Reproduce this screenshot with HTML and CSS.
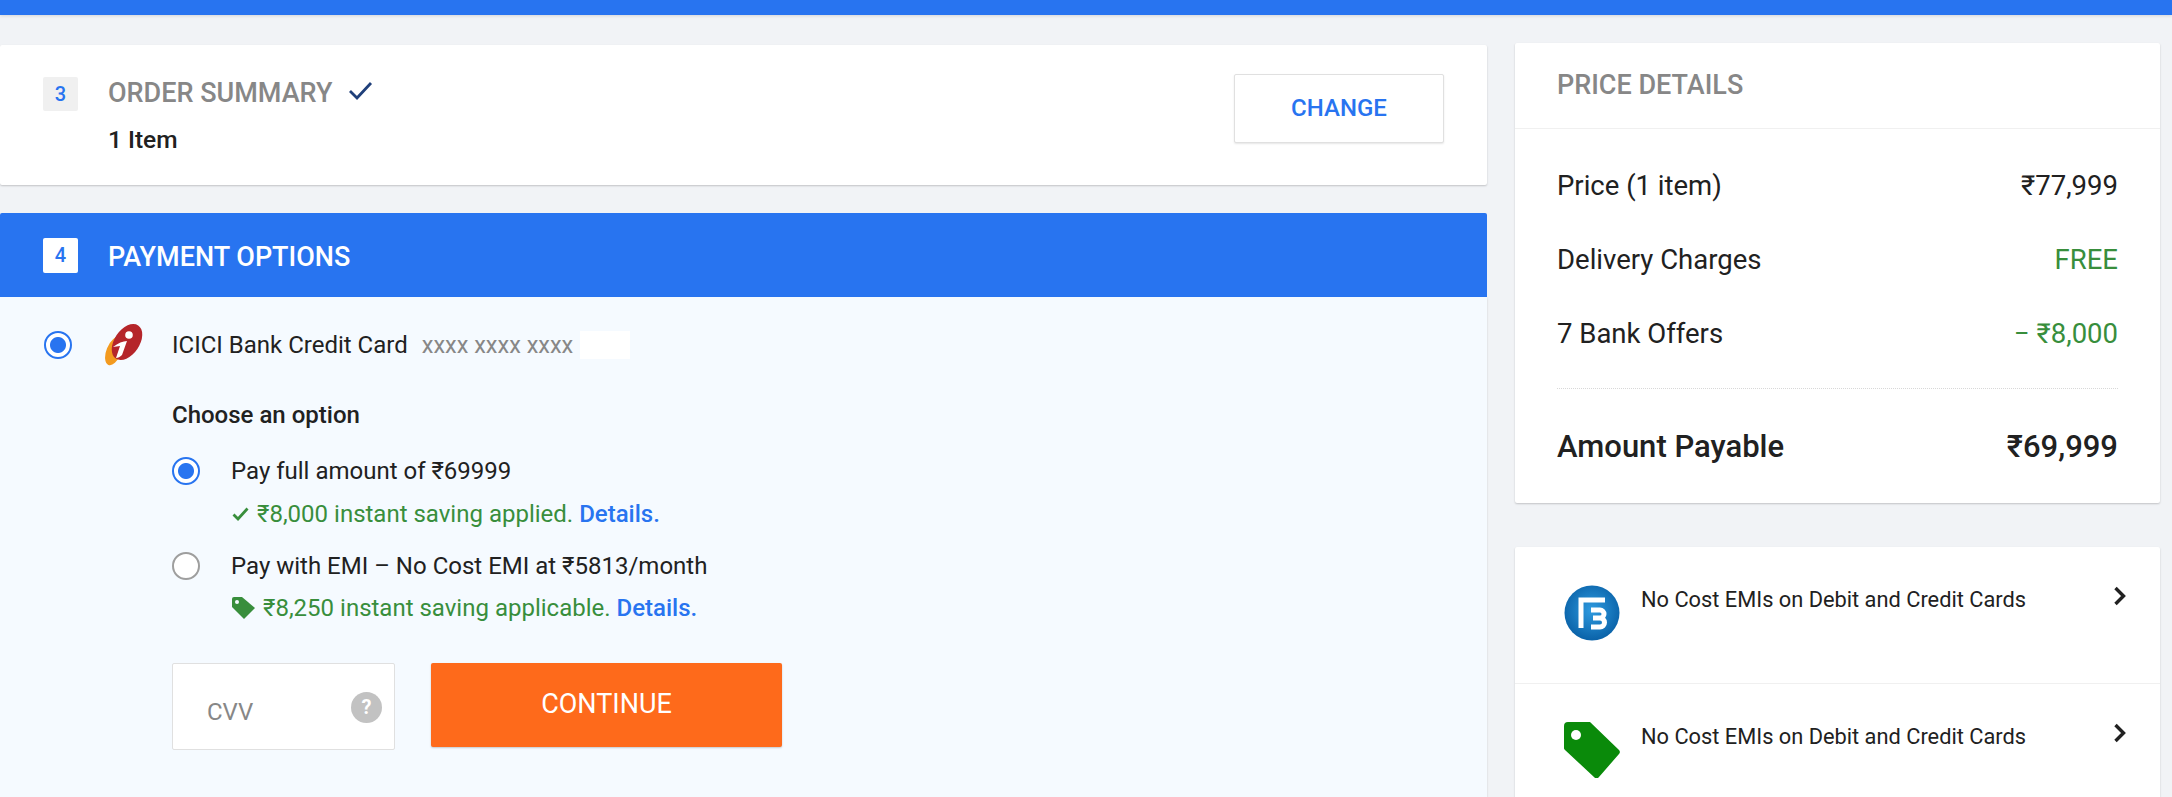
FILE: index.html
```html
<!DOCTYPE html>
<html lang="en">
<head>
    <meta charset="UTF-8">
    <title>Checkout</title>
    <link rel="stylesheet" href="styles.css">
</head>
<body>
    <div class="topbar"></div>

    <div class="page">
        <div class="main">
            <!-- step 3 -->
            <div class="card summary">
                <div class="step-no">3</div>
                <div class="summary-text">
                    <div class="step-title">ORDER SUMMARY
                        <svg class="tick" width="25" height="20" viewBox="0 0 25 20"><path d="M2 11l7 7L23 3" fill="none" stroke="#1f3f7a" stroke-width="2.8"/></svg>
                    </div>
                    <div class="item-count">1 Item</div>
                </div>
                <button class="change-button">CHANGE</button>
            </div>

            <!-- step 4 -->
            <div class="payment">
                <div class="payment-head">
                    <div class="step-no step-no-active">4</div>
                    <div class="payment-title">PAYMENT OPTIONS</div>
                </div>
                <div class="payment-body">
                    <div class="card-row">
                        <span class="radio radio-on"></span>
                        <svg class="bank-logo" width="41" height="42" viewBox="0 0 41 42">
                            <ellipse cx="10" cy="27" rx="7.500" ry="15" transform="rotate(22 10 27)" fill="#f39a1f"/>
                            <ellipse cx="23" cy="18" rx="12.500" ry="20" transform="rotate(34 23 18)" fill="#b5252a"/>
                            <circle cx="25" cy="11" r="3.800" fill="#fff"/>
                            <path d="M9 23c5-4 10-6 14-6l-5 14c-2 2-4 3-6 3l4-12c-2 0-5 1-7 1z" fill="#fff"/>
                        </svg>
                        <span class="card-name">ICICI Bank Credit Card</span>
                        <span class="card-no">xxxx xxxx xxxx</span>
                        <span class="card-mask"></span>
                    </div>

                    <div class="options">
                        <div class="options-title">Choose an option</div>

                        <div class="option">
                            <span class="radio radio-on"></span>
                            <span>Pay full amount of ₹69999</span>
                        </div>
                        <div class="saving">
                            <svg class="saving-tick" width="17" height="14" viewBox="0 0 17 14"><path d="M1.500 7.500l4.500 4.500L15.500 1.500" fill="none" stroke="#388e3c" stroke-width="2.800"/></svg>
                            <span>₹8,000 instant saving applied. <a class="details">Details.</a></span>
                        </div>

                        <div class="option option-emi">
                            <span class="radio"></span>
                            <span>Pay with EMI &ndash; No Cost EMI at ₹5813/month</span>
                        </div>
                        <div class="saving saving-tag">
                            <svg class="saving-icon" width="25" height="24" viewBox="0 0 25 24"><path d="M1 3a2 2 0 0 1 2-2h8l13 11-11 11L1 11z" fill="#388e3c"/><circle cx="6" cy="6" r="2" fill="#f5faff"/></svg>
                            <span>₹8,250 instant saving applicable. <a class="details">Details.</a></span>
                        </div>

                        <div class="pay-row">
                            <div class="cvv">
                                <span class="cvv-label">CVV</span>
                                <span class="cvv-help">?</span>
                            </div>
                            <button class="continue-button">CONTINUE</button>
                        </div>
                    </div>
                </div>
            </div>
        </div>

        <div class="side">
            <div class="card price">
                <div class="price-head">PRICE DETAILS</div>
                <div class="price-rows">
                    <div class="price-row"><span>Price (1 item)</span><span>₹77,999</span></div>
                    <div class="price-row"><span>Delivery Charges</span><span class="green">FREE</span></div>
                    <div class="price-row"><span>7 Bank Offers</span><span class="green">&minus; ₹8,000</span></div>
                    <div class="price-total"><span>Amount Payable</span><span>₹69,999</span></div>
                </div>
            </div>

            <div class="card offers">
                <div class="offer">
                    <svg class="offer-icon" width="56" height="56" viewBox="0 0 56 56">
                        <defs>
                            <radialGradient id="bfl" cx="50%" cy="45%" r="55%">
                                <stop offset="0" stop-color="#2f9be0"/>
                                <stop offset="1" stop-color="#0a62a8"/>
                            </radialGradient>
                        </defs>
                        <circle cx="28" cy="28" r="27.500" fill="url(#bfl)"/>
                        <path d="M17 43V15h24M27 25h9a4 4 0 0 1 0 8h-7M36 33a4.500 4.500 0 0 1 0 9H27" fill="none" stroke="#fff" stroke-width="5"/>
                    </svg>
                    <span class="offer-text">No Cost EMIs on Debit and Credit Cards</span>
                    <svg class="chevron" width="14" height="20" viewBox="0 0 14 20"><path d="M2.500 2l8 8-8 8" fill="none" stroke="#212121" stroke-width="3.400"/></svg>
                </div>
                <div class="offer">
                    <svg class="offer-icon" width="56" height="56" viewBox="0 0 56 56">
                        <path d="M0 4a4 4 0 0 1 4-4h22l29 28a3 3 0 0 1 0 4L35 55a3 3 0 0 1-5 0L1 28a3 3 0 0 1-1-3z" fill="#0a8a0a"/>
                        <circle cx="12" cy="13" r="5" fill="#fff"/>
                    </svg>
                    <span class="offer-text">No Cost EMIs on Debit and Credit Cards</span>
                    <svg class="chevron" width="14" height="20" viewBox="0 0 14 20"><path d="M2.500 2l8 8-8 8" fill="none" stroke="#212121" stroke-width="3.400"/></svg>
                </div>
            </div>
        </div>
    </div>
</body>
</html>
```

FILE: styles.css
```css
html, body {
    height: 797px;
    overflow: hidden;
}

body {
    font-family: Roboto, 'Noto Sans', sans-serif;
    background-color: #f1f3f6;
    margin: 0;
    padding: 0;
    color: #212121;
}

.topbar {
    height: 15px;
    background-color: #2874f0;
    box-shadow: 0 1px 3px rgba(0, 0, 0, 0.12);
}

.page {
    display: flex;
    gap: 28px;
    padding: 28px 12px 0 0;
}

.main {
    width: 1487px;
    padding-top: 2px;
}

.side {
    width: 645px;
}

.card {
    background: #fff;
    box-shadow: 0 1px 2px rgba(0, 0, 0, 0.2);
    border-radius: 2px;
}

/* step headers */
.summary {
    display: flex;
    align-items: flex-start;
    height: 140px;
    box-sizing: border-box;
    padding: 32px 43px 0;
}

.step-no {
    width: 35px;
    height: 34px;
    line-height: 34px;
    text-align: center;
    background-color: #f0f0f0;
    color: #2874f0;
    font-size: 20px;
    font-weight: 500;
    border-radius: 2px;
    flex-shrink: 0;
}

.summary-text {
    flex: 1;
    margin-left: 30px;
}

.step-title {
    font-size: 27px;
    font-weight: 500;
    line-height: 30px;
    padding-top: 1px;
    color: #878787;
}

.tick {
    margin-left: 9px;
    vertical-align: 2px;
}

.item-count {
    font-size: 24.500px;
    font-weight: 500;
    line-height: 30px;
    margin-top: 17px;
}

.change-button {
    width: 210px;
    height: 69px;
    margin-top: -3px;
    padding-bottom: 3px;
    background: #fff;
    border: 1px solid #e0e0e0;
    border-radius: 2px;
    box-shadow: 0 1px 2px rgba(0, 0, 0, 0.1);
    color: #2874f0;
    font-family: inherit;
    font-size: 24px;
    font-weight: 500;
}

.payment {
    margin-top: 28px;
}

.payment-head {
    display: flex;
    align-items: center;
    height: 84px;
    padding-left: 43px;
    background-color: #2874f0;
    border-radius: 2px 2px 0 0;
}

.step-no-active {
    background-color: #fff;
    height: 35px;
    line-height: 35px;
}

.payment-title {
    margin-left: 30px;
    padding-top: 3px;
    font-size: 27px;
    font-weight: 500;
    color: #fff;
}

.payment-body {
    height: 500px;
    background-color: #f5faff;
    box-shadow: 0 1px 2px rgba(0, 0, 0, 0.15);
}

/* radios */
.radio {
    display: inline-block;
    box-sizing: border-box;
    width: 28px;
    height: 28px;
    border: 2px solid #9e9e9e;
    border-radius: 50%;
    flex-shrink: 0;
    background: #fff;
}

.radio-on {
    border-color: #2874f0;
    background: radial-gradient(circle, #2874f0 0, #2874f0 7.5px, #fff 8.5px);
}

.card-row {
    display: flex;
    align-items: center;
    height: 42px;
    padding: 27px 0 0 44px;
    font-size: 24px;
}

.bank-logo {
    margin-left: 32px;
    flex-shrink: 0;
}

.card-name {
    margin-left: 27px;
}

.card-no {
    margin-left: 14px;
    font-size: 23.500px;
    color: #878787;
}

.card-mask {
    width: 50px;
    height: 28px;
    margin-left: 7px;
    background: #fff;
}

/* payment choices */
.options {
    margin-left: 172px;
    font-size: 24px;
}

.options-title {
    font-weight: 500;
    line-height: 26px;
    margin-top: 36px;
}

.option {
    display: flex;
    align-items: center;
    gap: 31px;
    height: 28px;
    margin-top: 29px;
}

.option-emi {
    margin-top: 26px;
}

.saving {
    display: flex;
    align-items: center;
    height: 24px;
    margin: 17px 0 0 60px;
    color: #388e3c;
}

.saving-tag {
    margin-top: 16px;
    margin-left: 59px;
}

.saving-tick {
    margin-right: 8px;
}

.saving-icon {
    margin-right: 7px;
}

.details {
    color: #2874f0;
    font-weight: 500;
}

.pay-row {
    display: flex;
    align-items: flex-start;
    gap: 36px;
    margin-top: 43px;
}

.cvv {
    display: flex;
    align-items: center;
    justify-content: space-between;
    box-sizing: border-box;
    width: 223px;
    height: 87px;
    padding: 0 12px 0 34px;
    background: #fff;
    border: 1px solid #e0e0e0;
    border-radius: 2px;
}

.cvv-label {
    color: #878787;
    font-size: 24px;
    margin-top: 10px;
}

.cvv-help {
    width: 31px;
    height: 31px;
    line-height: 31px;
    margin-top: 1px;
    text-align: center;
    border-radius: 50%;
    background-color: #c2c2c2;
    color: #fff;
    font-size: 20px;
    font-weight: 700;
}

.continue-button {
    width: 351px;
    height: 84px;
    padding-bottom: 3px;
    background-color: #fe6a1b;
    border: none;
    border-radius: 2px;
    box-shadow: 0 1px 2px rgba(0, 0, 0, 0.2);
    color: #fff;
    font-family: inherit;
    font-size: 27px;
    font-weight: 400;
}

/* price card */
.price {
    height: 460px;
}

.price-head {
    height: 85px;
    line-height: 85px;
    padding-left: 42px;
    border-bottom: 1px solid #f0f0f0;
    color: #878787;
    font-size: 27px;
    font-weight: 500;
}

.price-rows {
    padding: 0 42px;
}

.price-row {
    display: flex;
    justify-content: space-between;
    align-items: center;
    height: 74px;
    font-size: 27.500px;
}

.price-row:first-child {
    margin-top: 19px;
}

.green {
    color: #388e3c;
}

.price-total {
    display: flex;
    justify-content: space-between;
    align-items: center;
    height: 114px;
    margin-top: 18px;
    border-top: 1px dotted #d8d8d8;
    font-size: 31px;
    font-weight: 500;
}

/* offers */
.offers {
    margin-top: 44px;
    height: 300px;
}

.offer {
    display: flex;
    align-items: flex-start;
    height: 137px;
    box-sizing: border-box;
    padding: 38px 33px 0 49px;
    border-bottom: 1px solid #f0f0f0;
}

.offer-icon {
    flex-shrink: 0;
}

.offer-text {
    flex: 1;
    margin: 2px 0 0 21px;
    font-size: 21.800px;
    line-height: 26px;
}

.chevron {
    margin-top: 1px;
}
```
